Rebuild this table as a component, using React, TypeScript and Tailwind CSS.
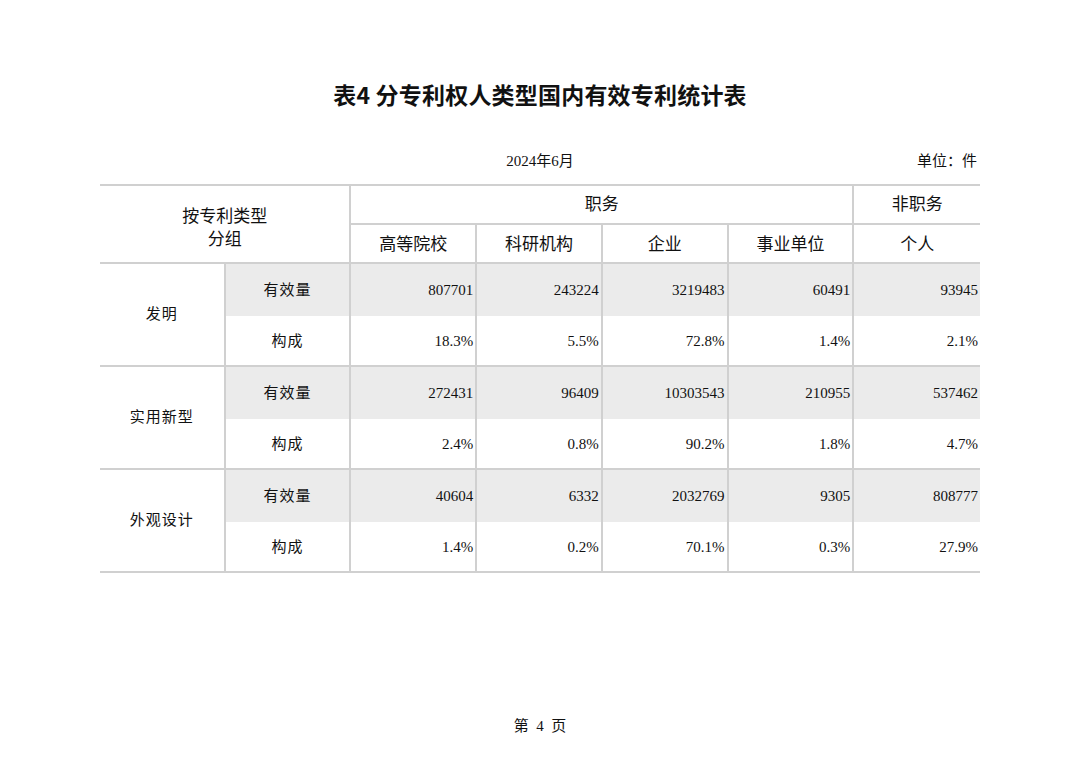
import React from "react";

const serif = "font-['Liberation_Serif','Noto_Sans_CJK_SC',serif]";
const B = "border-[#d0d0d0]";

type Group = { name: string; counts: string[]; shares: string[] };

const groups: Group[] = [
  {
    name: "发明",
    counts: ["807701", "243224", "3219483", "60491", "93945"],
    shares: ["18.3%", "5.5%", "72.8%", "1.4%", "2.1%"],
  },
  {
    name: "实用新型",
    counts: ["272431", "96409", "10303543", "210955", "537462"],
    shares: ["2.4%", "0.8%", "90.2%", "1.8%", "4.7%"],
  },
  {
    name: "外观设计",
    counts: ["40604", "6332", "2032769", "9305", "808777"],
    shares: ["1.4%", "0.2%", "70.1%", "0.3%", "27.9%"],
  },
];

const heads = ["高等院校", "科研机构", "企业", "事业单位"];

export default function App() {
  return (
    <div className={`w-[1080px] h-[763px] bg-white text-[#111] ${serif}`}>
      <div className="pt-[77px] text-center">
        <h1 className="text-[23px] leading-[34px] font-bold font-['Noto_Sans_CJK_SC',sans-serif] tracking-[0.2px]">
          表4 分专利权人类型国内有效专利统计表
        </h1>
      </div>
      <div className="w-[880px] mx-auto mt-[40px] relative h-[20px]">
        <div className="text-center text-[15px] leading-[20px]">2024年6月</div>
        <div className="absolute right-[3px] top-0 text-[15px] leading-[20px]">单位：件</div>
      </div>
      <div
        className={`w-[880px] mx-auto mt-[13px] grid grid-cols-7 grid-rows-[39px_39px_repeat(6,51.5px)] border-t-2 ${B}`}
      >
        <div
          className={`col-span-2 row-span-2 border-r-2 border-b-2 ${B} flex flex-col items-center justify-center text-[17px] leading-[23px] pt-[8px]`}
        >
          <span>按专利类型</span>
          <span>分组</span>
        </div>
        <div className={`col-span-4 border-r-2 border-b-2 ${B} flex items-center justify-center text-[17px]`}>
          职务
        </div>
        <div className={`border-b-2 ${B} flex items-center justify-center text-[17px]`}>非职务</div>
        {heads.map((h) => (
          <div key={h} className={`border-r-2 border-b-2 ${B} flex items-center justify-center text-[17px] pt-[3px]`}>
            {h}
          </div>
        ))}
        <div className={`border-b-2 ${B} flex items-center justify-center text-[17px] pt-[3px]`}>个人</div>
        {groups.map((g) => (
          <React.Fragment key={g.name}>
            <div
              className={`row-span-2 border-r-2 border-b-2 ${B} flex items-center justify-center text-[15px] tracking-[1px]`}
            >
              {g.name}
            </div>
            <div className={`border-r-2 ${B} bg-[#ebebeb] flex items-center justify-center text-[15px] tracking-[1px]`}>
              有效量
            </div>
            {g.counts.map((c, i) => (
              <div
                key={"c" + i}
                className={`${i < 4 ? "border-r-2" : ""} ${B} bg-[#ebebeb] flex items-center justify-end pr-[2px] text-[15px]`}
              >
                {c}
              </div>
            ))}
            <div className={`border-r-2 border-b-2 ${B} flex items-center justify-center text-[15px] tracking-[1px] pt-[2px]`}>
              构成
            </div>
            {g.shares.map((s, i) => (
              <div
                key={"s" + i}
                className={`${i < 4 ? "border-r-2" : ""} border-b-2 ${B} flex items-center justify-end pr-[2px] text-[15px] pt-[2px]`}
              >
                {s}
              </div>
            ))}
          </React.Fragment>
        ))}
      </div>
      <div className="mt-[143px] text-center text-[15px] leading-[20px] whitespace-pre">第  4  页</div>
    </div>
  );
}
